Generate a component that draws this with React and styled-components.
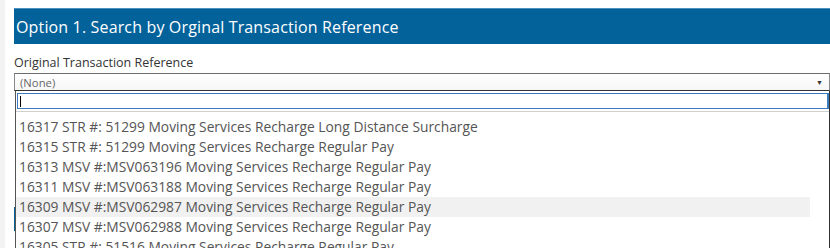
import React from "react";
import styled, { createGlobalStyle } from "styled-components";

const Global = createGlobalStyle`
  html, body { margin: 0; padding: 0; background: #fff; }
  body { font-family: "Open Sans", "Liberation Sans", sans-serif; }
  * { box-sizing: border-box; }
`;

const Page = styled.div`
  position: relative;
  width: 830px;
  height: 248px;
  overflow: hidden;
  border-left: 5px solid #f3f3f3;
  padding: 8px 0 0 9px;
`;

const Header = styled.div`
  height: 36px;
  background: #04629b;
  border-top: 1px solid #4f8fbf;
  color: #fff;
  font-size: 16px;
  display: flex;
  align-items: center;
  padding: 1px 0 0 2px;
  margin-right: -10px;
  letter-spacing: 0.15px;
`;

const Label = styled.div`
  margin-top: 9px;
  font-size: 12.5px;
  color: #333;
  height: 20px;
  line-height: 20px;
`;

const Field = styled.div`
  position: relative;
  width: 816px;
`;

const Select = styled.div`
  height: 18px;
  border: 1px solid #8a8a8a;
  border-top-color: #6d6d6d;
  border-bottom-color: #333;
  background: linear-gradient(#fff, #f6f6f6);
  display: flex;
  align-items: center;
  justify-content: space-between;
  padding: 1px 6px 0 5px;
  font-size: 11.3px;
  color: #666;
`;

const Arrow = styled.span`
  font-size: 7px;
  color: #333;
`;

const Dropdown = styled.div`
  position: absolute;
  left: 1px;
  right: 0;
  top: 18px;
  background: #fff;
  border-left: 1px solid #555;
  border-right: 1px solid #333;
  z-index: 2;
`;

const SearchWrap = styled.div`
  padding: 2px 0 2px 1px;
  border-bottom: 1px solid #cfcfcf;
  margin-bottom: 5px;
`;

const Search = styled.div`
  height: 16px;
  border: 1px solid #3c7bbf;
  border-right-width: 2px;
  display: flex;
  align-items: center;
  padding-left: 2px;
`;

const Caret = styled.span`
  width: 1px;
  height: 11px;
  background: #000;
`;

const List = styled.div`
  display: flex;
  flex-direction: column;
  padding-right: 19px;
`;

const Item = styled.div`
  height: 20px;
  line-height: 20px;
  font-size: 13.8px;
  color: #555;
  padding-left: 3px;
  white-space: nowrap;
  background: ${(p) => (p.$active ? "#f1f1f1" : "transparent")};
`;

const Behind = styled.div`
  margin-top: 116px;
  width: 120px;
  height: 24px;
  background: #04629b;
`;

const items = [
  "16317 STR #: 51299 Moving Services Recharge Long Distance Surcharge",
  "16315 STR #: 51299 Moving Services Recharge Regular Pay",
  "16313 MSV #:MSV063196 Moving Services Recharge Regular Pay",
  "16311 MSV #:MSV063188 Moving Services Recharge Regular Pay",
  "16309 MSV #:MSV062987 Moving Services Recharge Regular Pay",
  "16307 MSV #:MSV062988 Moving Services Recharge Regular Pay",
  "16305 STR #: 51516 Moving Services Recharge Regular Pay",
];

export default function App() {
  return (
    <>
      <Global />
      <Page>
        <Header>Option 1. Search by Orginal Transaction Reference</Header>
        <Label>Original Transaction Reference</Label>
        <Field>
          <Select>
            <span>(None)</span>
            <Arrow>▼</Arrow>
          </Select>
          <Dropdown>
            <SearchWrap>
              <Search>
                <Caret />
              </Search>
            </SearchWrap>
            <List>
              {items.map((t, i) => (
                <Item key={t} $active={i === 4}>
                  {t}
                </Item>
              ))}
            </List>
          </Dropdown>
          <Behind />
        </Field>
      </Page>
    </>
  );
}
